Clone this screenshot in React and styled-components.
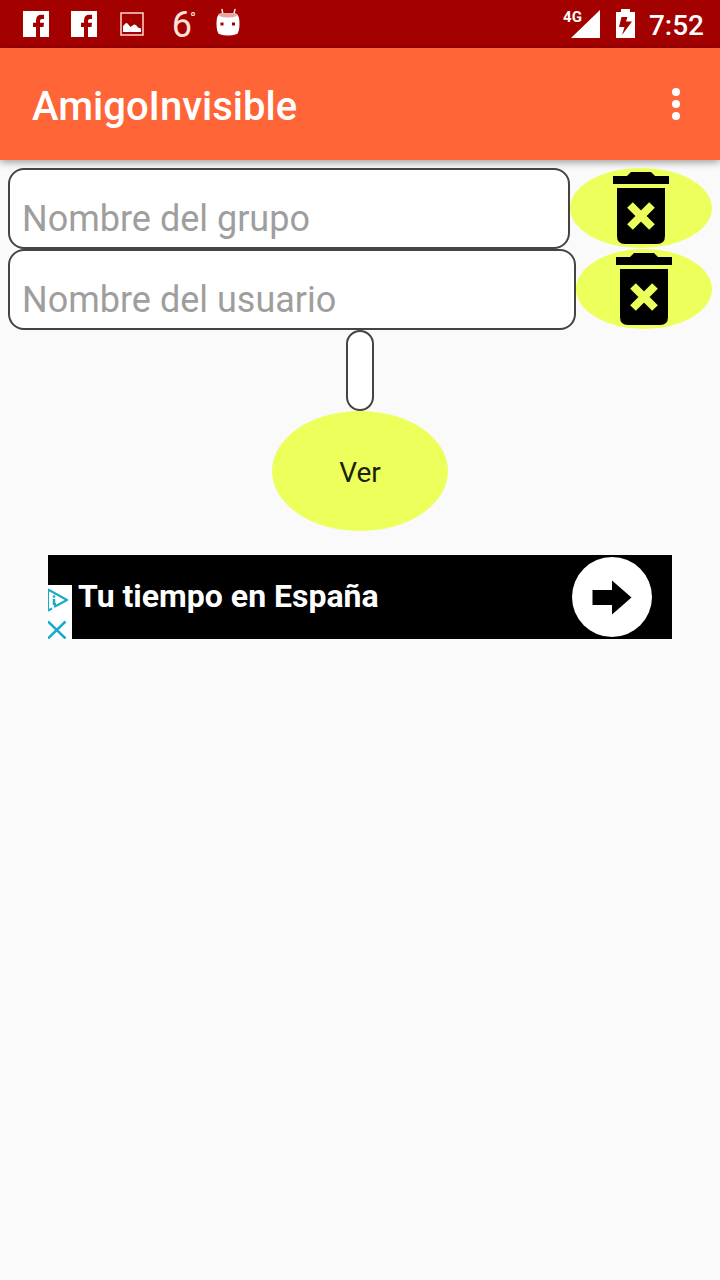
import React from "react";
import styled, { createGlobalStyle } from "styled-components";

const GlobalStyle = createGlobalStyle`
  * { box-sizing: border-box; }
  body {
    margin: 0;
    background: #fafafa;
    font-family: Roboto, "Liberation Sans", sans-serif;
  }
  button, input { font-family: inherit; }
`;

const StatusBar = styled.div`
  display: flex;
  align-items: center;
  justify-content: space-between;
  height: 48px;
  padding: 0 16px 0 12px;
  background: #a30000;
  color: #fff;
`;

const StatusGroup = styled.div`
  display: flex;
  align-items: center;
  height: 48px;
`;

const StatusIcon = styled.svg`
  display: block;
  width: ${(p) => p.$width || 48}px;
  height: 48px;
`;

const Temperature = styled.span`
  display: flex;
  justify-content: flex-end;
  width: 48px;
  padding: 2px 8px 0 0;
  color: #ffe1dc;
  font-size: 36px;
  font-weight: 400;
  line-height: 48px;

  sup {
    margin-left: -2px;
    font-size: 16px;
    line-height: 36px;
  }
`;

const Network = styled.span`
  margin-right: -12px;
  padding-bottom: 14px;
  font-size: 15px;
  font-weight: 700;
  line-height: 18px;
`;

const Clock = styled.time`
  margin-left: 8px;
  padding-top: 4px;
  font-size: 28px;
  font-weight: 500;
  line-height: 48px;
`;

const AppBar = styled.header`
  display: flex;
  align-items: center;
  justify-content: space-between;
  height: 112px;
  padding: 0 20px 0 32px;
  background: #ff6536;
  color: #fff;
  box-shadow: 0 2px 8px rgba(0, 0, 0, 0.4);
`;

const Title = styled.h1`
  margin: 0;
  padding-top: 6px;
  font-size: 40px;
  font-weight: 500;
  line-height: 48px;
`;

const MenuButton = styled.button`
  width: 48px;
  height: 48px;
  padding: 0;
  border: 0;
  background: none;
  color: inherit;

  svg { display: block; }
`;

const Content = styled.main`
  display: flex;
  flex-direction: column;
  align-items: center;
  padding: 8px;
`;

const FieldRow = styled.form`
  display: flex;
  align-items: flex-start;
  width: 100%;
`;

const Field = styled.input`
  flex: 1;
  min-width: 0;
  height: 81px;
  padding: 20px 12px 0;
  border: 2px solid #444;
  border-radius: 16px;
  background: #fff;
  color: #212121;
  font-size: 36px;

  &::placeholder {
    color: #9e9e9e;
    opacity: 1;
  }
`;

const OvalButton = styled.button`
  display: flex;
  align-items: center;
  justify-content: center;
  width: ${(p) => p.$width}px;
  height: ${(p) => p.$height}px;
  padding: 0;
  border: 0;
  border-radius: 50%;
  background: #ecff5a;
  color: #1c1f0b;
  font-size: 28px;
`;

const ShowButton = styled(OvalButton)`
  padding-top: 2px;
`;

const Result = styled.output`
  width: 28px;
  height: 81px;
  border: 2px solid #444;
  border-radius: 14px;
  background: #fff;
`;

const Banner = styled.aside`
  position: relative;
  display: flex;
  align-items: center;
  justify-content: space-between;
  align-self: stretch;
  height: 84px;
  margin: 24px 40px 0;
  padding: 0 20px 0 30px;
  background: #000;
`;

const BannerLink = styled.a`
  padding-bottom: 2px;
  color: #fff;
  font-size: 32px;
  font-weight: 700;
  line-height: 40px;
  text-decoration: none;
`;

const GoButton = styled.button`
  width: 80px;
  height: 80px;
  padding: 0;
  border: 0;
  border-radius: 50%;
  background: #fff;

  svg { display: block; }
`;

const AdChoices = styled.div`
  position: absolute;
  left: 0;
  bottom: 0;
  display: flex;
  flex-direction: column;
  background: #fff;
`;

const AdChoiceButton = styled.button`
  width: 24px;
  height: 27px;
  padding: 0;
  border: 0;
  background: none;

  svg { display: block; }
`;

const FacebookIcon = () => (
  <StatusIcon viewBox="0 0 48 48" aria-hidden="true">
    <rect x="11" y="11" width="26" height="26" fill="#fff" />
    <path
      fill="#a30000"
      d="M24 37V27H21V22.700H24V20.500Q24 14.700 29.500 14.700H32V19H30Q28 19 28 21V22.700H32L31.500 27H28V37Z"
    />
  </StatusIcon>
);

const PictureIcon = () => (
  <StatusIcon viewBox="0 0 48 48" aria-hidden="true">
    <rect x="13" y="13" width="22" height="22" fill="none" stroke="#ffd5d0" strokeWidth="1.500" />
    <path fill="#fff" d="M15 32V26L18 23L19.500 23.500L22.500 27L26 24.500L28 25L30 27.500L33 28.500V32Z" />
  </StatusIcon>
);

const AndroidIcon = () => (
  <StatusIcon viewBox="0 0 48 48" aria-hidden="true">
    <path d="M18 9.500L19 15M31 9.500L29.500 15" stroke="#ffe6e2" strokeWidth="1.500" strokeLinecap="round" />
    <path
      fill="#fff"
      d="M16 13.500Q24 12.500 32 13.500Q35.500 15 35.500 23Q35.500 32 33 34Q24 37 15 34Q12.500 32 12.500 23Q12.500 15 16 13.500Z"
    />
    <path fill="#e6a5a5" d="M16 13.500Q24 12.500 32 13.500L33 16Q24 19 15 16Z" />
    <rect x="16.500" y="22.500" width="3" height="3" fill="#a30000" />
    <rect x="28" y="22.500" width="3" height="3" fill="#a30000" />
  </StatusIcon>
);

const SignalIcon = () => (
  <StatusIcon $width={30} viewBox="0 0 30 48" aria-hidden="true">
    <path fill="#fff" d="M30 10V38H1Z" />
  </StatusIcon>
);

const BatteryIcon = () => (
  <StatusIcon $width={41} viewBox="0 0 41 48" aria-hidden="true">
    <path fill="#fff" d="M21 9H30V12H35V38H16V12H21Z" />
    <path fill="#a30000" d="M21.500 17H27.500L26 21.500H32L22 35L24.500 27H19Z" />
  </StatusIcon>
);

const TrashIcon = () => (
  <svg width="56" height="72" viewBox="0 0 56 72" aria-hidden="true">
    <path d="M0 4H14L18 0H38L42 4H56V12H0Z" />
    <path d="M4 16H52V64Q52 72 44 72H12Q4 72 4 64Z" />
    <path
      d="M17 33L39 55M39 33L17 55"
      stroke="#ecff5a"
      strokeWidth="8"
    />
  </svg>
);

const fields = [
  { name: "grupo", placeholder: "Nombre del grupo", action: "Borrar grupo", width: 142 },
  { name: "usuario", placeholder: "Nombre del usuario", action: "Borrar usuario", width: 136 },
];

export default function App() {
  return (
    <>
      <GlobalStyle />
      <StatusBar>
        <StatusGroup>
          <FacebookIcon />
          <FacebookIcon />
          <PictureIcon />
          <Temperature>
            6<sup>°</sup>
          </Temperature>
          <AndroidIcon />
        </StatusGroup>
        <StatusGroup>
          <Network>4G</Network>
          <SignalIcon />
          <BatteryIcon />
          <Clock>7:52</Clock>
        </StatusGroup>
      </StatusBar>
      <AppBar>
        <Title>AmigoInvisible</Title>
        <MenuButton type="button" aria-label="Más opciones">
          <svg width="48" height="48" viewBox="0 0 48 48" fill="#fff" aria-hidden="true">
            <circle cx="24" cy="12" r="4" />
            <circle cx="24" cy="24" r="4" />
            <circle cx="24" cy="36" r="4" />
          </svg>
        </MenuButton>
      </AppBar>
      <Content>
        {fields.map((f) => (
          <FieldRow key={f.name} onSubmit={(e) => e.preventDefault()}>
            <Field name={f.name} placeholder={f.placeholder} aria-label={f.placeholder} />
            <OvalButton type="button" aria-label={f.action} $width={f.width} $height={80}>
              <TrashIcon />
            </OvalButton>
          </FieldRow>
        ))}
        <Result aria-label="Resultado" />
        <ShowButton type="button" $width={176} $height={120}>
          Ver
        </ShowButton>
        <Banner>
          <BannerLink href="#tiempo">Tu tiempo en España</BannerLink>
          <GoButton type="button" aria-label="Abrir">
            <svg width="80" height="80" viewBox="0 0 80 80" aria-hidden="true">
              <path d="M20.500 33H40V23.500L59.500 40.500L40 57.500V48H20.500Z" />
            </svg>
          </GoButton>
          <AdChoices>
            <AdChoiceButton type="button" aria-label="Información del anuncio">
              <svg width="24" height="27" viewBox="0 0 24 27" fill="none" stroke="#19a9c9" strokeWidth="2" aria-hidden="true">
                <path d="M0 4.500L19 15L7 21.500V18M0 4V25.500L4 23.500" strokeLinejoin="round" />
                <path d="M6 14V20" strokeWidth="2.500" />
                <circle cx="6" cy="11.500" r="1.300" fill="#19a9c9" stroke="none" />
              </svg>
            </AdChoiceButton>
            <AdChoiceButton type="button" aria-label="Cerrar anuncio">
              <svg width="24" height="27" viewBox="0 0 24 27" fill="none" stroke="#19a9c9" strokeWidth="2.500" aria-hidden="true">
                <path d="M0 9.500L17.500 26.500M17.500 9.500L0 26.500" />
              </svg>
            </AdChoiceButton>
          </AdChoices>
        </Banner>
      </Content>
    </>
  );
}
